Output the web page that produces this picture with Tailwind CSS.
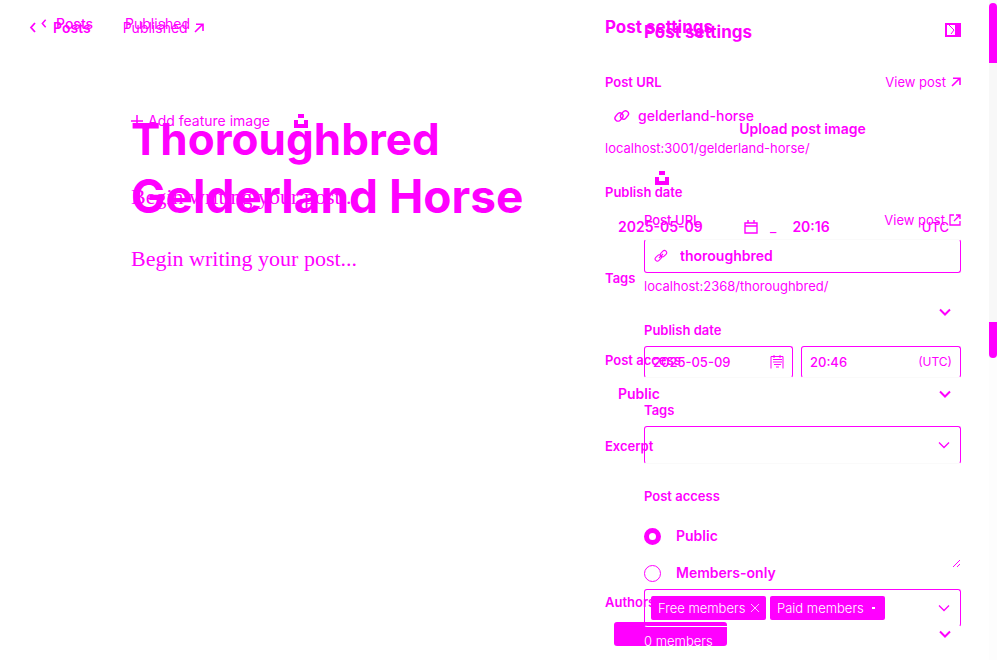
<!DOCTYPE html>
<html lang="en">
<head>
<meta charset="utf-8">
<title>Post settings</title>
<script src="https://cdn.jsdelivr.net/npm/@tailwindcss/browser@4"></script>
</head>
<body class="min-h-screen overflow-hidden bg-white font-[Inter,sans-serif] text-[13px] leading-5 text-[#ff00ff]">
<svg class="hidden">
  <symbol id="chev" viewBox="0 0 12 8"><path d="M1 1.5 6 6.5l5-5" fill="none" stroke="currentColor" stroke-width="2"/></symbol>
  <symbol id="chev-thin" viewBox="0 0 12 8"><path d="M1 1.5 6 6.5l5-5" fill="none" stroke="currentColor" stroke-width="1.3"/></symbol>
  <symbol id="back" viewBox="0 0 8 12"><path d="M6 1 2 5.5 6 10" fill="none" stroke="currentColor" stroke-width="1.8"/></symbol>
  <symbol id="arrow" viewBox="0 0 10 10"><path d="M1 9 8.5 1.5M2 1.2h7V8" fill="none" stroke="currentColor" stroke-width="1.6"/></symbol>
  <symbol id="unsplash" viewBox="0 0 14 14"><path d="M4 0h6v4H4zM0 6h4v4h6V6h4v8H0z" fill="currentColor"/></symbol>
  <symbol id="link" viewBox="0 0 16 16"><g fill="none" stroke="currentColor" stroke-width="1.4"><rect x="0.5" y="6" width="9" height="6" rx="3" transform="rotate(-50 5 9)"/><rect x="6" y="4" width="9" height="6" rx="3" transform="rotate(-50 10.5 7)"/></g></symbol>
  <symbol id="link-b" viewBox="0 0 14 14"><g fill="none" stroke="currentColor" stroke-width="1.1"><rect x="0.8" y="6.8" width="7" height="4.4" rx="2.2" transform="rotate(-45 4.3 9)"/><rect x="6" y="2.5" width="7" height="4.4" rx="2.2" transform="rotate(-45 9.5 4.7)"/><path d="m5 9 4-4"/></g></symbol>
</svg>
<div class="grid h-screen min-h-[600px] grid-cols-[minmax(0,1fr)_356px_39px] overflow-hidden">
  <main class="grid grid-cols-[minmax(0,1fr)] items-start">
    <section class="col-start-1 row-start-1">
      <header class="mt-[18px] flex h-5 items-center pl-[29px] text-[14px]">
        <a href="#" class="flex items-center font-semibold"><svg class="mr-4 h-3 w-2"><use href="#back"/></svg>Posts</a>
        <a href="#" class="ml-8 flex items-center gap-[6px]">Published<svg class="size-[10px]"><use href="#arrow"/></svg></a>
      </header>
      <h1 class="mt-[73px] pl-[131px] font-bold leading-[57px]"><span class="block text-[44px]">Thoroughbred</span><span class="block text-[46px]">Gelderland Horse</span></h1>
      <p class="mt-5 pl-[131px] font-['Liberation_Serif',serif] text-[22px] leading-7">Begin writing your post...</p>
    </section>
    <section class="col-start-1 row-start-1">
      <header class="mt-[14px] flex h-5 items-center pl-[40px] text-[14px]">
        <a href="#" class="flex items-center font-medium"><svg class="mr-2 h-[10px] w-2"><use href="#back"/></svg>Posts</a>
        <span class="ml-8">Published</span>
      </header>
      <div class="mt-[77px] flex h-5 items-center pl-[131px] text-[14px]">
        <button class="flex items-center gap-[5px]"><svg viewBox="0 0 12 12" class="size-3"><path d="M6 0v12M0 6h12" stroke="currentColor" stroke-width="1.5"/></svg>Add feature image</button>
        <button class="ml-6" aria-label="Unsplash"><svg class="size-[14px]"><use href="#unsplash"/></svg></button>
      </div>
      <p class="mt-[52px] pl-[131px] font-['Liberation_Serif',serif] text-[22px] leading-7">Begin writing your post...</p>
    </section>
  </main>

  <aside class="grid grid-cols-[minmax(0,1fr)] items-start">
    <form class="col-start-1 row-start-1 font-semibold">
      <h2 class="mt-[17px] text-[17px] font-bold leading-5">Post settings</h2>
      <div class="mt-[35px] flex justify-between"><label for="url-a">Post URL</label><a href="#" class="flex items-center gap-[5px] font-normal">View post<svg class="size-[10px]"><use href="#arrow"/></svg></a></div>
      <div class="mt-[6px] flex h-9 items-center gap-2 pl-[9px]"><svg class="size-4"><use href="#link"/></svg><input id="url-a" value="gelderland-horse" class="min-w-0 flex-1 text-[14px] font-medium outline-none"></div>
      <p class="mt-1 font-normal">localhost:3001/gelderland-horse/</p>
      <label for="date-a" class="mt-6 block">Publish date</label>
      <div class="mt-[7px] flex h-9 items-center pl-[13px] text-[14px]">
        <input id="date-a" value="2025-05-09" class="w-[126px] outline-none">
        <svg viewBox="0 0 14 14" class="size-[14px]"><path d="M1 3h12v10H1zM1 6h12M4 0v3M10 0v3" fill="none" stroke="currentColor" stroke-width="1.4"/></svg>
        <span class="ml-3 font-normal">_</span>
        <input aria-label="Time" value="20:16" class="ml-4 min-w-0 flex-1 outline-none">
        <span class="mr-3 text-[13px] font-medium">UTC</span>
      </div>
      <label for="tags-a" class="mt-[23px] block">Tags</label>
      <div class="mt-[6px] flex h-9 items-center pr-[10px]"><input id="tags-a" class="min-w-0 flex-1 outline-none"><svg class="h-2 w-3"><use href="#chev"/></svg></div>
      <label for="access-a" class="mt-5 block">Post access</label>
      <div class="mt-[6px] flex h-9 items-center pl-[13px] pr-[10px]"><select id="access-a" class="min-w-0 flex-1 appearance-none text-[14px] outline-none"><option>Public</option></select><svg class="h-2 w-3"><use href="#chev"/></svg></div>
      <label for="excerpt" class="mt-6 block">Excerpt</label>
      <div class="mt-[6px] flex h-[107px] items-end"><textarea id="excerpt" class="h-full min-w-0 flex-1 resize-none outline-none"></textarea><svg viewBox="0 0 10 10" class="size-[10px]"><path d="M2 8 9 1M6 8l3-3" stroke="currentColor"/></svg></div>
      <p class="mt-[23px]">Authors</p>
      <div class="mt-1 flex h-9 items-center justify-between pl-[9px] pr-[10px]"><button type="button" class="h-6 w-[113px] rounded-[3px] bg-[#ff00ff]" aria-label="Author"></button><svg class="h-2 w-3"><use href="#chev"/></svg></div>
    </form>

    <form class="col-start-1 row-start-1 ml-[39px] font-semibold">
      <div class="mt-[20px] flex h-5 items-center justify-between"><h2 class="pt-1 text-[17px] font-bold leading-5">Post settings</h2><button type="button" aria-label="Close settings"><svg viewBox="0 0 16 14" class="h-[14px] w-4"><path d="M1 1h14v12H1z" fill="none" stroke="currentColor" stroke-width="2"/><path d="M10 1h5v12h-5z" fill="currentColor"/><path d="m4 2 5 5-3 4" fill="none" stroke="currentColor"/></svg></button></div>
      <div class="mt-[71px] flex h-9 items-center justify-center"><button type="button" class="h-9 rounded-[3px] px-[14px] text-[14px]">Upload post image</button></div>
      <div class="mt-[21px] flex h-5 items-center pl-[11px]"><button type="button" aria-label="Unsplash"><svg class="size-[14px]"><use href="#unsplash"/></svg></button></div>
      <div class="mt-[22px] flex justify-between font-medium"><label for="url-b">Post URL</label><a href="#" class="flex items-center gap-1 font-normal">View post<svg viewBox="0 0 12 12" class="size-3"><path d="M5 1H1v10h10V7M7 1h4v4M11 1 5 7" fill="none" stroke="currentColor" stroke-width="1.3"/></svg></a></div>
      <div class="mt-[9px] flex h-[34px] items-center gap-3 rounded-[3px] border border-[#ff00ff] border-t-[#fafafa] pl-[9px]"><svg class="size-[14px]"><use href="#link-b"/></svg><input id="url-b" value="thoroughbred" class="min-w-0 flex-1 text-[14px] outline-none"></div>
      <p class="mt-[3px] font-normal">localhost:2368/thoroughbred/</p>
      <label for="date-b" class="mt-6 block">Publish date</label>
      <div class="mt-[6px] flex h-8 gap-2 font-medium">
        <div class="flex w-[149px] items-center rounded-[3px] border border-[#ff00ff] border-b-[#fafafa] px-2"><input id="date-b" value="2025-05-09" class="min-w-0 flex-1 outline-none"><svg viewBox="0 0 14 14" class="size-[14px]"><path d="M1 1.5h12v12M1 1.5v12M3 4.5h9M3 7h9M4 9.5h7M6 12h3M4 0v3M10 0v3" fill="none" stroke="currentColor"/></svg></div>
        <div class="flex min-w-0 flex-1 items-center rounded-[3px] border border-[#ff00ff] border-b-[#fafafa] px-2"><input aria-label="Time" value="20:46" class="min-w-0 flex-1 outline-none"><span class="text-[12px] font-normal">(UTC)</span></div>
      </div>
      <label for="tags-b" class="mt-[22px] block">Tags</label>
      <div class="mt-[6px] flex h-[38px] items-center rounded-[3px] border border-[#ff00ff] border-b-[#fafafa] pr-[10px]"><input id="tags-b" class="min-w-0 flex-1 outline-none"><svg class="h-2 w-3"><use href="#chev-thin"/></svg></div>
      <p class="mt-[22px]">Post access</p>
      <label class="mt-5 flex h-5 items-center gap-[15px] text-[14px]"><input type="radio" name="access" checked class="size-[17px] appearance-none rounded-full border border-[#ff00ff] checked:border-[5px]">Public</label>
      <label class="mt-[17px] flex h-5 items-center gap-[15px] text-[14px]"><input type="radio" name="access" class="size-[17px] appearance-none rounded-full border border-[#ff00ff] checked:border-[5px]">Members-only</label>
      <div class="mt-[6px] flex h-[38px] items-center gap-1 rounded-[3px] border border-[#ff00ff] border-b-white pl-[6px] pr-[10px] font-light text-white">
        <button type="button" class="flex h-6 w-[115px] items-center justify-between rounded-[2px] bg-[#ff00ff] px-[7px]">Free members<svg viewBox="0 0 8 8" class="size-2"><path d="m0 0 8 8M8 0 0 8" stroke="currentColor" stroke-width="0.8"/></svg></button>
        <button type="button" class="flex h-6 w-[115px] items-center justify-between rounded-[2px] bg-[#ff00ff] px-[7px]">Paid members<svg viewBox="0 0 8 8" class="size-2"><path d="M2 3h3v2H2z" fill="currentColor"/></svg></button>
        <svg class="ml-auto h-2 w-3 text-[#ff00ff]"><use href="#chev-thin"/></svg>
      </div>
      <p class="mt-1 font-light text-white">0 members</p>
    </form>
  </aside>
  <div class="flex justify-end pr-[3px]">
    <div class="flex w-2 flex-col bg-[#f8f8f8]"><div class="mt-[3px] h-[60px] rounded-t-full bg-[#ff00ff]"></div><div class="mt-[259px] h-9 rounded-b-full bg-[#ff00ff]"></div><div class="flex-1 bg-[#fdfdfd]"></div></div>
  </div>
</div>
</body>
</html>
